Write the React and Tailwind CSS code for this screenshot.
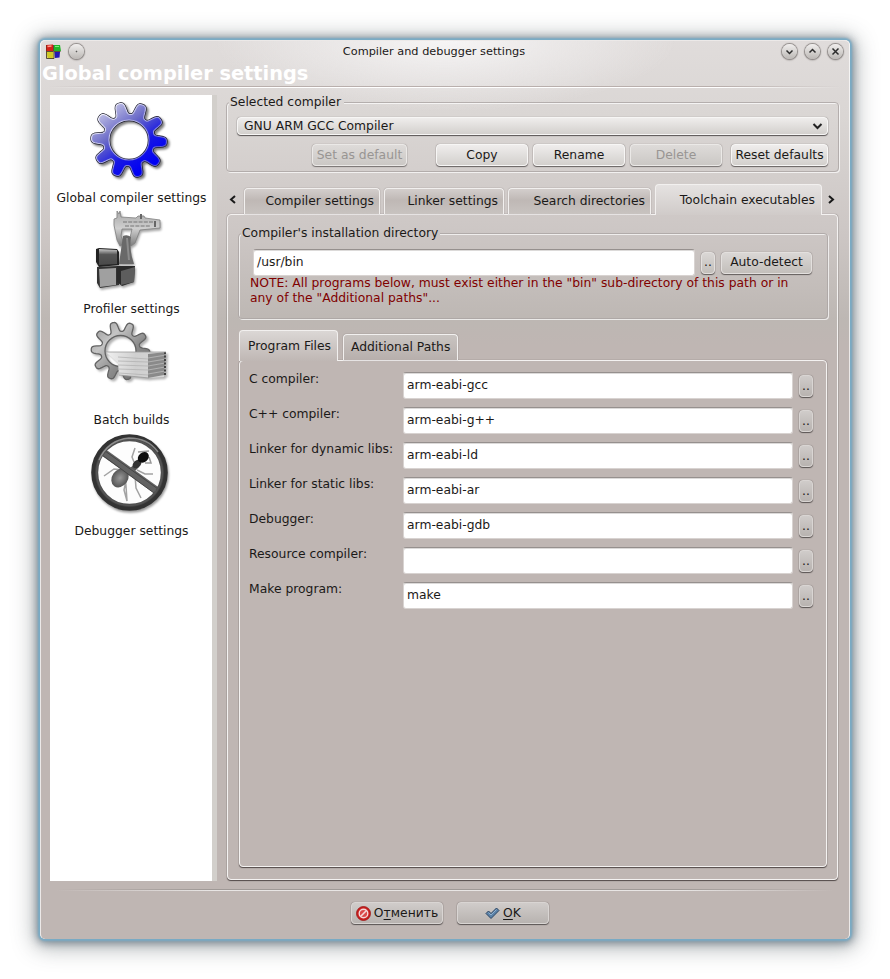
import React from "react";

const btnBase =
  "flex items-center justify-center rounded-[4px] border whitespace-nowrap h-[22px] shrink-0";

function Button({ className = "", tone = "light", disabled, children }) {
  const tones = {
    light:
      "border-[#f7f6f5] bg-linear-to-b from-[#efedec] to-[#d3d0cd] shadow-[0_1px_1px_rgba(50,45,45,.65),0_0_1px_rgba(60,50,50,.6)]",
    mid: "border-[#e3e0de] bg-linear-to-b from-[#dad7d5] to-[#c3bfbb] shadow-[0_1px_1px_rgba(50,45,45,.65),0_0_1px_rgba(60,50,50,.6)]",
    dark: "border-[#d9d5d3] bg-linear-to-b from-[#d0ccca] to-[#b8b3b0] shadow-[0_1px_1px_rgba(50,45,45,.7),0_0_1px_rgba(60,50,50,.6)]",
    off: "border-[#ebe9e7] bg-linear-to-b from-[#dedbd9] to-[#cbc8c5] shadow-[0_1px_1px_rgba(50,45,45,.55),0_0_1px_rgba(60,50,50,.5)]",
  };
  return (
    <button className={`${btnBase} ${tones[tone]} ${disabled ? "text-[#989593]" : ""} ${className}`}>
      {children}
    </button>
  );
}

function Frame({ clip }) {
  return (
    <div
      className={`pointer-events-none absolute inset-0 rounded-[4px] border border-[#aaa4a2]/80 shadow-[1px_1px_0_rgba(255,255,255,.7),inset_1px_1px_0_rgba(255,255,255,.7)] ${clip}`}
    />
  );
}

const pane =
  "rounded-[4px] border border-[#f4f2f1] shadow-[0_1px_1px_rgba(50,42,42,.75),0_0_1px_rgba(60,50,50,.7)]";

function Tab({ className = "", selected, children }) {
  return (
    <div
      className={`relative flex shrink-0 items-center whitespace-nowrap rounded-t-[4px] border border-b-0 border-[#f2f0ef] ${
        selected ? "z-10 h-[31px]" : "h-[26px] shadow-[0_0_1px_rgba(60,50,50,.7)]"
      } ${className}`}
    >
      {children}
    </div>
  );
}

function Input({ className = "", children }) {
  return (
    <div
      className={`flex shrink-0 items-center rounded-[3px] border border-[#d8d3d1] border-t-[#96908e] bg-white pl-[3px] shadow-[inset_0_1px_0_#dcdad9] ${className}`}
    >
      {children}
    </div>
  );
}

function gearPath(cx, cy, base, amp, hole) {
  let d = "";
  const n = 240;
  for (let i = 0; i < n; i++) {
    const a = (i / n) * Math.PI * 2;
    const c = Math.cos(10 * (a - (3 * Math.PI) / 180));
    const r = base + (amp * Math.tanh(1.9 * c)) / Math.tanh(1.9);
    d += `${i ? "L" : "M"}${(cx + r * Math.cos(a)).toFixed(2)} ${(cy + r * Math.sin(a)).toFixed(2)}`;
  }
  return `${d}Z M${cx + hole} ${cy}A${hole} ${hole} 0 1 0 ${cx - hole} ${cy}A${hole} ${hole} 0 1 0 ${cx + hole} ${cy}Z`;
}

function GearIcon() {
  const d = gearPath(40, 41, 31.5, 6, 20);
  return (
    <svg width="84" height="84" viewBox="0 0 84 84" className="drop-shadow-[2px_2px_1px_rgba(0,0,0,.5)]">
      <defs>
        <linearGradient id="blue" x1=".2" y1=".1" x2=".75" y2=".85">
          <stop offset="0" stopColor="#b9b9e2" />
          <stop offset=".35" stopColor="#6a6ac8" />
          <stop offset=".7" stopColor="#1616e4" />
          <stop offset="1" stopColor="#0000f4" />
        </linearGradient>
        <linearGradient id="rim" x1=".1" y1=".1" x2=".8" y2=".8">
          <stop offset="0" stopColor="#fff" />
          <stop offset="1" stopColor="#5b5bd0" />
        </linearGradient>
      </defs>
      <path d={d} fillRule="evenodd" fill="#111" stroke="#1a1a2c" strokeWidth="2.4" strokeLinejoin="round" />
      <path d={d} fillRule="evenodd" fill="url(#blue)" stroke="url(#rim)" strokeWidth="1.1" strokeLinejoin="round" />
    </svg>
  );
}

function CaliperIcon() {
  return (
    <svg width="84" height="84" viewBox="0 0 84 84" className="drop-shadow-[1px_2px_1px_rgba(0,0,0,.35)]">
      <defs>
        <linearGradient id="steel" x1="0" y1="0" x2="0" y2="1">
          <stop offset="0" stopColor="#a8a8a8" />
          <stop offset=".5" stopColor="#cfcfcf" />
          <stop offset="1" stopColor="#7d7d7d" />
        </linearGradient>
        <linearGradient id="blk" x1="0" y1="0" x2="0" y2="1">
          <stop offset="0" stopColor="#c8c8c8" />
          <stop offset=".35" stopColor="#555" />
          <stop offset="1" stopColor="#4a4a4a" />
        </linearGradient>
      </defs>
      <path d="M28 1L30 4L31 1L32 7L47 8L49 6H55L56 8L71 10V18L51 20L46 33L42 36L40 32L43 19H33L32 26L35 34L31 36L28 30L25 15V9L28 8Z" fill="url(#steel)" stroke="#808080" strokeWidth=".8" />
      <path d="M34 12H66M36 16H62" stroke="#777" strokeWidth="1.2" strokeDasharray="4 1.2" />
      <path d="M66 11V17M52 4V9" stroke="#666" strokeWidth="2" />
      <path d="M34 26Q38 24 42 27Q40 40 45 54H30Z" fill="#696969" />
      <path d="M38 28L40 50" stroke="#8b8b8b" strokeWidth="2" />
      <path d="M7 39L10 38L28 39L30 42V55L10 57L7 52Z" fill="#222" />
      <path d="M10 39L28 40V54L10 55Z" fill="url(#blk)" />
      <path d="M8 57L28 56L30 60V75L11 78L8 73Z" fill="#333" />
      <path d="M10 59L27 58V75L11 77Z" fill="#a0a0a0" />
      <path d="M28 56L46 56L45 72L33 76L28 72Z" fill="#2a2a2a" />
      <path d="M32 61L46 57L45 72L32 75Z" fill="#5d5d5d" />
    </svg>
  );
}

function BatchIcon() {
  const d = gearPath(31.5, 30, 24.5, 4.8, 15.5);
  return (
    <svg width="84" height="84" viewBox="0 0 84 84" className="drop-shadow-[2px_2px_1px_rgba(0,0,0,.3)]">
      <defs>
        <linearGradient id="grey" x1="0" y1="0" x2="1" y2="1">
          <stop offset="0" stopColor="#909090" />
          <stop offset=".3" stopColor="#c4c4c4" />
          <stop offset=".6" stopColor="#8b8b8b" />
          <stop offset="1" stopColor="#666" />
        </linearGradient>
        <linearGradient id="paper" x1="0" y1="0" x2="1" y2="0">
          <stop offset="0" stopColor="#f0f0f0" />
          <stop offset=".5" stopColor="#cfcfcf" />
          <stop offset="1" stopColor="#d6d6d6" />
        </linearGradient>
      </defs>
      <path d={d} fillRule="evenodd" fill="url(#grey)" stroke="#636363" strokeWidth="1.3" />
      <path d="M17 31L76 31L75 56L60 57L30 54L29 42Z" fill="url(#paper)" />
      <path d="M59 33L77 31L75 54L59 57Z" fill="#8a8a8a" />
      <path d="M29 36L59 38M29 40L59 41M29 44L59 45M29 48L59 49M30 52L59 54" stroke="#b3b3b3" strokeWidth=".8" />
      <path d="M59 37L77 34M59 41L77 38M59 45L76 42M59 49L76 46M59 53L76 50" stroke="#bbb" strokeWidth=".8" />
      <path d="M76 31V55" stroke="#444" strokeWidth="2" strokeDasharray="2 1.5" />
      <path d="M17 31H77M30 54L60 57" stroke="#999" strokeWidth=".8" />
    </svg>
  );
}

function AntIcon() {
  return (
    <svg width="84" height="84" viewBox="0 0 84 84" className="drop-shadow-[1px_2px_1px_rgba(0,0,0,.4)]">
      <defs>
        <radialGradient id="ring" cx=".5" cy=".5" r=".5">
          <stop offset=".8" stopColor="#a0a0a0" />
          <stop offset=".88" stopColor="#4a4a4a" />
          <stop offset=".95" stopColor="#555" />
          <stop offset="1" stopColor="#333" />
        </radialGradient>
        <radialGradient id="body">
          <stop offset="0" stopColor="#999" />
          <stop offset="1" stopColor="#555" />
        </radialGradient>
      </defs>
      <circle cx="40.500" cy="40.500" r="33" fill="#fdfdfd" />
      <g fill="none" stroke="#a3a3a3" strokeWidth="1.5">
        <path d="M35 38L25 37L15 44M36 43L37 54L38 69L35 58L38 44M46 43L47 56L52 66M48 38L56 42L64 42M45 30L43 25L46 16" />
        <path d="M49 20L60 19M60 25L62 31L56 31" stroke="#999" />
      </g>
      <ellipse cx="31" cy="46" rx="8" ry="10" transform="rotate(35 31 46)" fill="url(#body)" />
      <path d="M36 40L46 32L50 35L42 43Z" fill="#555" />
      <ellipse cx="48" cy="32" rx="5" ry="3.500" transform="rotate(-40 48 32)" fill="#333" />
      <ellipse cx="54" cy="25.500" rx="6" ry="4.800" transform="rotate(-40 54 25)" fill="#0c0c0c" />
      <path d="M14 20L67 58" stroke="#626262" strokeWidth="7.500" />
      <path d="M14 17.500L69 57M13 23L65 61" stroke="#454545" strokeWidth="1" />
      <circle cx="40.500" cy="40.500" r="34.800" fill="none" stroke="url(#ring)" strokeWidth="7" />
      <path d="M10 28Q19 8 40 6Q59 6 69 20" fill="none" stroke="#a9a9a9" strokeWidth="1.5" opacity=".7" />
    </svg>
  );
}

function RoundButton({ children }) {
  return (
    <span className="flex size-[15px] items-center justify-center rounded-full bg-linear-to-b from-[#f1efee] to-[#bcb8b5] shadow-[0_0_1px_1px_#8f8a88,0_1px_2px_rgba(40,30,30,.4)]">
      <svg width="15" height="15" viewBox="0 0 15 15" fill="none" stroke="#2c2c2c" strokeWidth="1.5">
        {children}
      </svg>
    </span>
  );
}

const sideItems = [
  ["Global compiler settings", GearIcon],
  ["Profiler settings", CaliperIcon],
  ["Batch builds", BatchIcon],
  ["Debugger settings", AntIcon],
];

const fields = [
  ["C compiler:", "arm-eabi-gcc"],
  ["C++ compiler:", "arm-eabi-g++"],
  ["Linker for dynamic libs:", "arm-eabi-ld"],
  ["Linker for static libs:", "arm-eabi-ar"],
  ["Debugger:", "arm-eabi-gdb"],
  ["Resource compiler:", ""],
  ["Make program:", "make"],
];

const idleTab = "bg-linear-to-b from-[#d3cecc] via-[#bfb8b5] via-45% to-[#c8c3c0]";

export default function App() {
  return (
    <div className="h-[979px] w-[890px] overflow-hidden bg-white pl-[40px] pt-[40px] font-['DejaVu_Sans',sans-serif] text-[12.33px] leading-[15px] text-[#1b1918]">
      <div className="flex h-[899px] w-[810px] flex-col rounded-[5px] border border-b-0 border-white/70 bg-[radial-gradient(ellipse_230px_70px_at_50%_0,#f6f5f5_0%,rgba(240,238,238,.7)_45%,transparent_100%),linear-gradient(to_bottom,#e0dcdb_0px,#dad6d4_75px,#ccc6c4_195px,#bdb7b3_280px,#bfb6b3_305px,#bfb6b3_100%)] shadow-[0_0_2px_2px_#79acc7,0_1px_8px_3px_rgba(70,90,105,.6),0_3px_22px_6px_rgba(60,70,75,.4)]">
        <header className="flex h-[21px] shrink-0 items-center">
          <svg width="16" height="16" viewBox="0 0 16 16" className="ml-[5px]">
            <path d="M0 1L7 .5V7H0Z" fill="#d32018" />
            <path d="M8 1H14L15 7H8Z" fill="#22b52a" />
            <path d="M.5 8H7.500V14.500L1.500 14Z" fill="#cfc926" />
            <path d="M8.500 8H14L13.500 13.500L9 14Z" fill="#2418b4" />
            <path d="M1.500 2.500L5.500 2" stroke="#ff9a8a" strokeWidth="1.5" />
            <path d="M9 2.500H13" stroke="#7cf080" />
            <path d="M0 1V7.500H7.500V1M8 7.500H14.500M.5 8V14.500H8V8" stroke="#3a2a10" strokeWidth=".8" fill="none" />
          </svg>
          <div className="ml-[7px]">
            <RoundButton>
              <circle cx="7.500" cy="7.500" r=".4" strokeWidth=".8" />
            </RoundButton>
          </div>
          <div className="w-[658px] grow text-center text-[11.3px]">
            <span className="relative left-[1px]">Compiler and debugger settings</span>
          </div>
          <div className="mr-[6px] flex gap-[8px]">
            <RoundButton>
              <path d="M4.500 6.500L7.500 9.500L10.500 6.500" />
            </RoundButton>
            <RoundButton>
              <path d="M4.500 8.500L7.500 5.500L10.500 8.500" />
            </RoundButton>
            <RoundButton>
              <path d="M4.500 4.500L10.500 10.500M10.500 4.500L4.500 10.500" />
            </RoundButton>
          </div>
        </header>
        <h1 className="ml-[1px] h-[24px] shrink-0 whitespace-nowrap text-[19.35px] font-bold leading-[24px] text-white">
          Global compiler settings
        </h1>
        <div className="mx-[8px] h-[2px] shrink-0 bg-[linear-gradient(to_right,transparent,#b9afac_15%,#b9afac_85%,transparent),linear-gradient(to_right,transparent,#fff_15%,#fff_85%,transparent)] bg-[length:100%_1px] bg-[position:0_0,0_1px] bg-no-repeat" />
        <main className="mt-[7px] flex h-[786px] shrink-0 pl-[9px]">
          <aside className="w-[167px] shrink-0 border-r-[5px] border-[#d2cfcb] bg-white">
            {sideItems.map(([label, Icon]) => (
              <div key={label} className="flex h-[111px] flex-col items-center">
                <div className="ml-[-1px] mt-[4px] h-[84px] w-[84px]">
                  <Icon />
                </div>
                <div className="mt-[8px] whitespace-nowrap pr-[7px]">
                  <span className="relative left-[4px]">{label}</span>
                </div>
              </div>
            ))}
          </aside>

          <section className="ml-[9px] w-[613px]">
            <div className="relative h-[77px]">
              <div className="absolute inset-x-0 bottom-0 top-[7px]">
                <Frame clip="[clip-path:polygon(-3px_-3px,3px_-3px,3px_4px,118px_4px,118px_-3px,101%_-3px,101%_103%,-3px_103%)]" />
              </div>
              <div className="relative h-[22px] pl-[4px]">Selected compiler</div>
              <div className="relative ml-[11px] flex h-[18px] w-[591px] items-center rounded-[4px] border border-[#f7f6f5] bg-linear-to-b from-[#efedec] to-[#d3d0cd] pl-[6px] shadow-[0_1px_1px_rgba(50,45,45,.75),0_0_1px_rgba(60,50,50,.6)]">
                <span className="grow">GNU ARM GCC Compiler</span>
                <svg width="11" height="8" viewBox="0 0 11 8" className="mr-[4px]" fill="none" stroke="#222" strokeWidth="2">
                  <path d="M1.500 2L5.500 6L9.500 2" />
                </svg>
              </div>
              <div className="relative mt-[9px] flex pl-[86px]">
                <Button tone="off" disabled className="w-[95px]">Set as default</Button>
                <Button className="ml-[29px] w-[92px]">Copy</Button>
                <Button className="ml-[5px] w-[92px]">Rename</Button>
                <Button tone="off" disabled className="ml-[5px] w-[92px]">Delete</Button>
                <Button className="ml-[9px] w-[97px]">Reset defaults</Button>
              </div>
            </div>

            <div className="mt-[12px] flex h-[31px] items-end">
              <svg width="18" height="31" viewBox="0 0 18 31" fill="none" stroke="#1a1a1a" strokeWidth="2">
                <path d="M9 12L5 15.500L9 19" />
              </svg>
              <Tab className={`mb-[1px] w-[136px] justify-end pr-[5px] ${idleTab}`}>Compiler settings</Tab>
              <Tab className={`mb-[1px] ml-[4px] w-[120px] justify-end pr-[5px] ${idleTab}`}>Linker settings</Tab>
              <Tab className={`mb-[1px] ml-[4px] w-[143px] justify-end pr-[5px] ${idleTab}`}>Search directories</Tab>
              <Tab selected className="ml-[4px] w-[167px] justify-end bg-linear-to-b from-[#e5e2e1] to-[#d0cbc9] pr-[6px]">
                Toolchain executables
              </Tab>
              <svg width="17" height="31" viewBox="0 0 17 31" fill="none" stroke="#1a1a1a" strokeWidth="2">
                <path d="M7 12L11 15.500L7 19" />
              </svg>
            </div>

            <div className={`ml-[1px] mt-[-1px] flex h-[666px] w-[611px] flex-col pl-[10px] ${pane}`}>
              <div className="relative mt-[11px] h-[94px] w-[590px] shrink-0">
                <div className="absolute inset-x-0 bottom-[1px] top-[7px]">
                  <Frame clip="[clip-path:polygon(-3px_-3px,3px_-3px,3px_4px,202px_4px,202px_-3px,101%_-3px,101%_103%,-3px_103%)]" />
                </div>
                <div className="relative pl-[4px]">Compiler's installation directory</div>
                <div className="relative mt-[8px] flex items-center pl-[15px]">
                  <Input className="h-[27px] w-[442px]">/usr/bin</Input>
                  <Button tone="mid" className="ml-[6px] w-[14px]">..</Button>
                  <Button tone="mid" className="ml-[6px] w-[91px]">Auto-detect</Button>
                </div>
                <p className="relative whitespace-nowrap pl-[12px] text-[#800000]">
                  NOTE: All programs below, must exist either in the "bin" sub-directory of this path or in
                  <br />
                  any of the "Additional paths"...
                </p>
              </div>
              <div className="mt-[10px] flex h-[31px] shrink-0 items-end">
                <Tab selected className="ml-[1px] w-[99px] bg-linear-to-b from-[#dbd7d5] to-[#bfb7b4] pl-[8px]">
                  Program Files
                </Tab>
                <Tab className="mb-[1px] ml-[5px] w-[115px] bg-linear-to-b from-[#c9c4c1] to-[#b7afac] pl-[7px]">
                  Additional Paths
                </Tab>
              </div>
              <div className={`ml-[1px] mt-[-1px] flex h-[507px] w-[588px] shrink-0 flex-col gap-[8px] pt-[11px] ${pane}`}>
                {fields.map(([label, value]) => (
                  <div key={label} className="flex h-[27px]">
                    <div className="w-[154px] shrink-0 pl-[9px]">{label}</div>
                    <Input className="ml-[9px] h-[27px] w-[390px]">{value}</Input>
                    <Button tone="dark" className="ml-[6px] mt-[3px] w-[14px]">..</Button>
                  </div>
                ))}
              </div>
            </div>
          </section>
        </main>

        <footer className="shrink-0">
          <div className="mx-[15px] mt-[8px] h-[2px] bg-[linear-gradient(to_right,transparent,#9f9996_20%,#9f9996_80%,transparent),linear-gradient(to_right,transparent,#e8e5e4_20%,#e8e5e4_80%,transparent)] bg-[length:100%_1px] bg-[position:0_0,0_1px] bg-no-repeat" />
          <div className="mt-[11px] flex pl-[310px]">
            <Button tone="dark" className="w-[92px] gap-[3px]">
              <svg width="15" height="15" viewBox="0 0 15 15">
                <circle cx="7.500" cy="7.500" r="7" fill="#c81e1e" stroke="#9c1414" strokeWidth=".8" />
                <circle cx="7.500" cy="7.500" r="4.300" fill="#d94a4a" stroke="#f4d8d8" strokeWidth="1.400" />
                <path d="M4.500 10.500L10.500 4.500" stroke="#f4d8d8" strokeWidth="1.600" />
              </svg>
              <span>О<u className="underline-offset-2">т</u>менить</span>
            </Button>
            <Button tone="dark" className="ml-[14px] w-[92px] gap-[3px]">
              <svg width="15" height="13" viewBox="0 0 15 13">
                <path d="M1 6.500L3.500 4L6 6.500L11.500 1L14 3.500L6 11.500Z" fill="#5b82a8" stroke="#2a4462" strokeLinejoin="round" />
                <path d="M3.500 5.500L6 8L11.500 2.500" fill="none" stroke="#8fb0cf" />
              </svg>
              <span><u className="underline-offset-2">O</u>K</span>
            </Button>
          </div>
        </footer>
      </div>
    </div>
  );
}
